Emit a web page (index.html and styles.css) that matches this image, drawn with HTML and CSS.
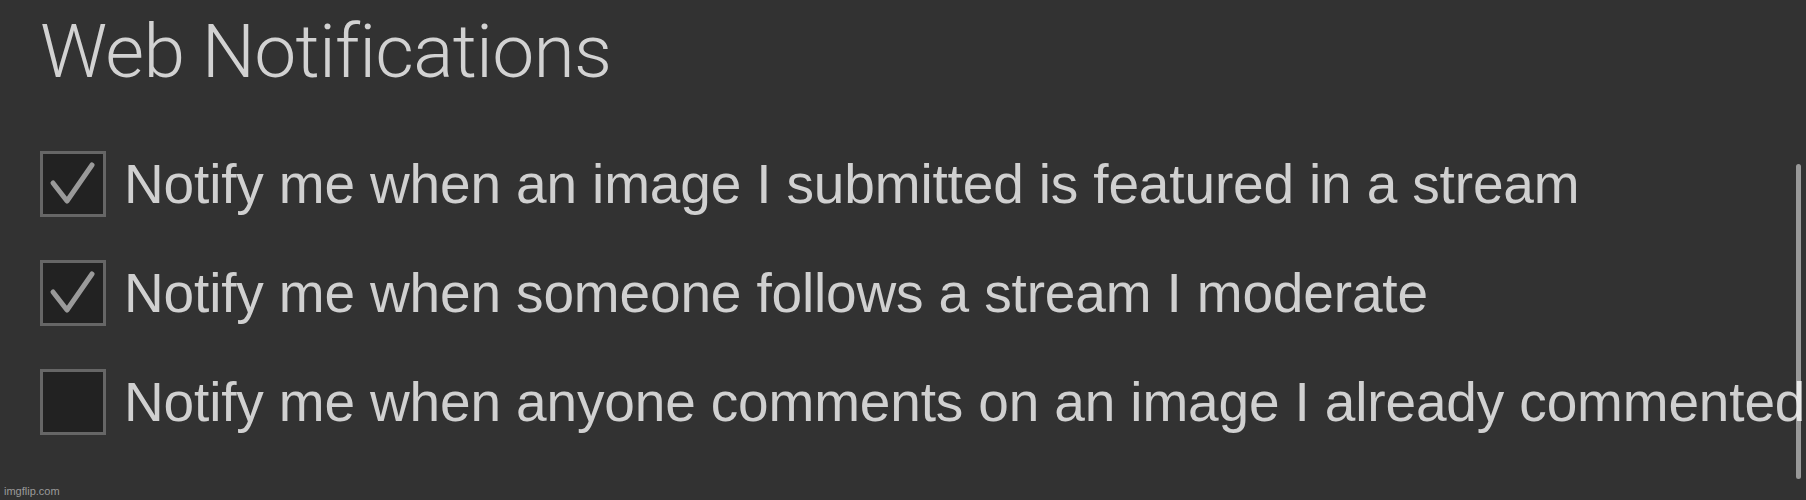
FILE: index.html
```html
<!DOCTYPE html>
<html>
<head>
<meta charset="utf-8">
<link rel="stylesheet" href="styles.css">
</head>
<body>
<div class="page">
  <h1 class="title">Web Notifications</h1>
  <ul class="options">
    <li class="option">
      <span class="box"><svg viewBox="0 0 66 66" width="66" height="66"><polyline points="13,32 27,50 52,14" /></svg></span>
      <span class="label">Notify me when an image I submitted is featured in a stream</span>
    </li>
    <li class="option">
      <span class="box"><svg viewBox="0 0 66 66" width="66" height="66"><polyline points="13,32 27,50 52,14" /></svg></span>
      <span class="label">Notify me when someone follows a stream I moderate</span>
    </li>
    <li class="option">
      <span class="box"></span>
      <span class="label">Notify me when anyone comments on an image I already commented</span>
    </li>
  </ul>
  <div class="scrollbar"></div>
  <div class="watermark">imgflip.com</div>
</div>
</body>
</html>
```
FILE: styles.css
```css
html, body {
  margin: 0;
  padding: 0;
  background: #323232;
}
.page {
  position: relative;
  width: 1806px;
  height: 500px;
  overflow: hidden;
  box-sizing: border-box;
  padding: 14px 0 0 40px;
}
.title {
  margin: 0;
  font-family: "Roboto", sans-serif;
  font-weight: 300;
  font-size: 75px;
  line-height: 75px;
  color: #d2d2d2;
  letter-spacing: -0.75px;
}
.options {
  list-style: none;
  margin: 62px 0 0 0;
  padding: 0;
  display: flex;
  flex-direction: column;
  gap: 43px;
}
.option {
  display: flex;
  align-items: center;
  gap: 18px;
  white-space: nowrap;
}
.box {
  flex: none;
  width: 66px;
  height: 66px;
  box-sizing: border-box;
  border: 3px solid #666666;
  background: #222222;
  position: relative;
}
.box svg {
  position: absolute;
  left: -3px;
  top: -3px;
}
.box polyline {
  fill: none;
  stroke: #9a9a9a;
  stroke-width: 5;
  stroke-linecap: round;
  stroke-linejoin: round;
}
.label {
  font-family: "Liberation Sans", Arial, sans-serif;
  font-size: 55px;
  letter-spacing: -0.15px;
  line-height: 66px;
  color: #d0d0d0;
}
.scrollbar {
  position: absolute;
  left: 1796px;
  top: 164px;
  width: 5px;
  height: 315px;
  border-radius: 3px;
  background: rgba(255, 255, 255, 0.5);
}
.watermark {
  position: absolute;
  left: 4px;
  bottom: 3px;
  font-family: "Liberation Sans", Arial, sans-serif;
  font-size: 11px;
  color: #9a9a9a;
}
```
